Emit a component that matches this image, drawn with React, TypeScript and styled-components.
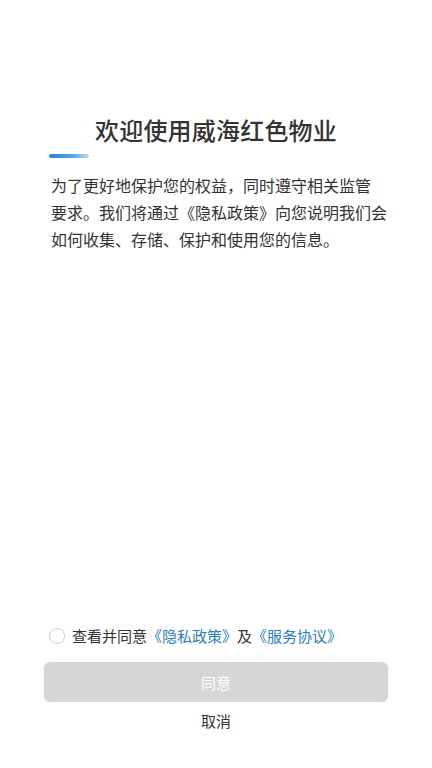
import { useState } from 'react';
import styled, { createGlobalStyle } from 'styled-components';

const GlobalStyle = createGlobalStyle`
  html, body {
    margin: 0;
    padding: 0;
    background: #ffffff;
  }
  body {
    font-family: "Noto Sans CJK SC", "Noto Sans", sans-serif;
    color: #333333;
  }
`;

const App = () => {
  const [checked, setChecked] = useState(false);

  return (
    <>
      <GlobalStyle />
      <Page>
        <Header>
          <Title>欢迎使用威海红色物业</Title>
          <Accent />
        </Header>

        <Intro>
          为了更好地保护您的权益，同时遵守相关监管
          <br />
          要求。我们将通过《隐私政策》向您说明我们会
          <br />
          如何收集、存储、保护和使用您的信息。
        </Intro>

        <Spacer />

        <Footer>
          <AgreeRow onClick={() => setChecked(c => !c)}>
            <Radio $checked={checked} />
            <AgreeText>
              查看并同意<Link>《隐私政策》</Link>及<Link>《服务协议》</Link>
            </AgreeText>
          </AgreeRow>
          <PrimaryButton $enabled={checked}>同意</PrimaryButton>
          <CancelButton>取消</CancelButton>
        </Footer>
      </Page>
    </>
  );
};

export default App;

// ───────── Styled Components ─────────

const Page = styled.div`
  width: 432px;
  height: 768px;
  display: flex;
  flex-direction: column;
  background: #ffffff;
  overflow: hidden;
`;

const Header = styled.div`
  display: flex;
  flex-direction: column;
  padding: 112px 0 0 49px;
`;

const Title = styled.h1`
  margin: 0;
  padding-right: 49px;
  font-size: 24px;
  line-height: 36px;
  font-weight: 500;
  text-align: center;
  color: #333333;
  letter-spacing: 0.2px;
`;

const Accent = styled.div`
  width: 40px;
  height: 4px;
  margin-top: 6px;
  border-radius: 2px;
  background: linear-gradient(90deg, #2486d6 0%, #4aa6e6 55%, #b6dcf5 100%);
`;

const Intro = styled.p`
  margin: 14px 0 0;
  padding: 0 40px 0 51px;
  font-size: 16px;
  line-height: 27px;
  color: #333333;
  white-space: nowrap;
`;

const Spacer = styled.div`
  flex: 1;
`;

const Footer = styled.div`
  display: flex;
  flex-direction: column;
  align-items: center;
  padding: 0 44px 36px;
`;

const AgreeRow = styled.div`
  align-self: flex-start;
  display: flex;
  align-items: center;
  gap: 7px;
  padding-left: 5px;
  cursor: pointer;
`;

const Radio = styled.span<{ $checked: boolean }>`
  width: 14px;
  height: 14px;
  border-radius: 50%;
  border: 1px solid #cfcfcf;
  background: ${p => (p.$checked ? '#2a84c6' : '#ffffff')};
  box-sizing: content-box;
`;

const AgreeText = styled.span`
  font-size: 15px;
  line-height: 22px;
  color: #333333;
`;

const Link = styled.span`
  color: #2a7fc0;
`;

const PrimaryButton = styled.button<{ $enabled: boolean }>`
  width: 100%;
  height: 40px;
  margin-top: 15px;
  border: none;
  border-radius: 6px;
  background: ${p => (p.$enabled ? '#2a84c6' : '#d6d6d8')};
  color: #ffffff;
  font-family: "Noto Sans CJK SC", "Noto Sans", sans-serif;
  font-size: 15px;
  cursor: pointer;
`;

const CancelButton = styled.button`
  margin-top: 8px;
  padding: 0;
  border: none;
  background: none;
  color: #333333;
  font-family: "Noto Sans CJK SC", "Noto Sans", sans-serif;
  font-size: 15px;
  line-height: 22px;
  cursor: pointer;
`;
